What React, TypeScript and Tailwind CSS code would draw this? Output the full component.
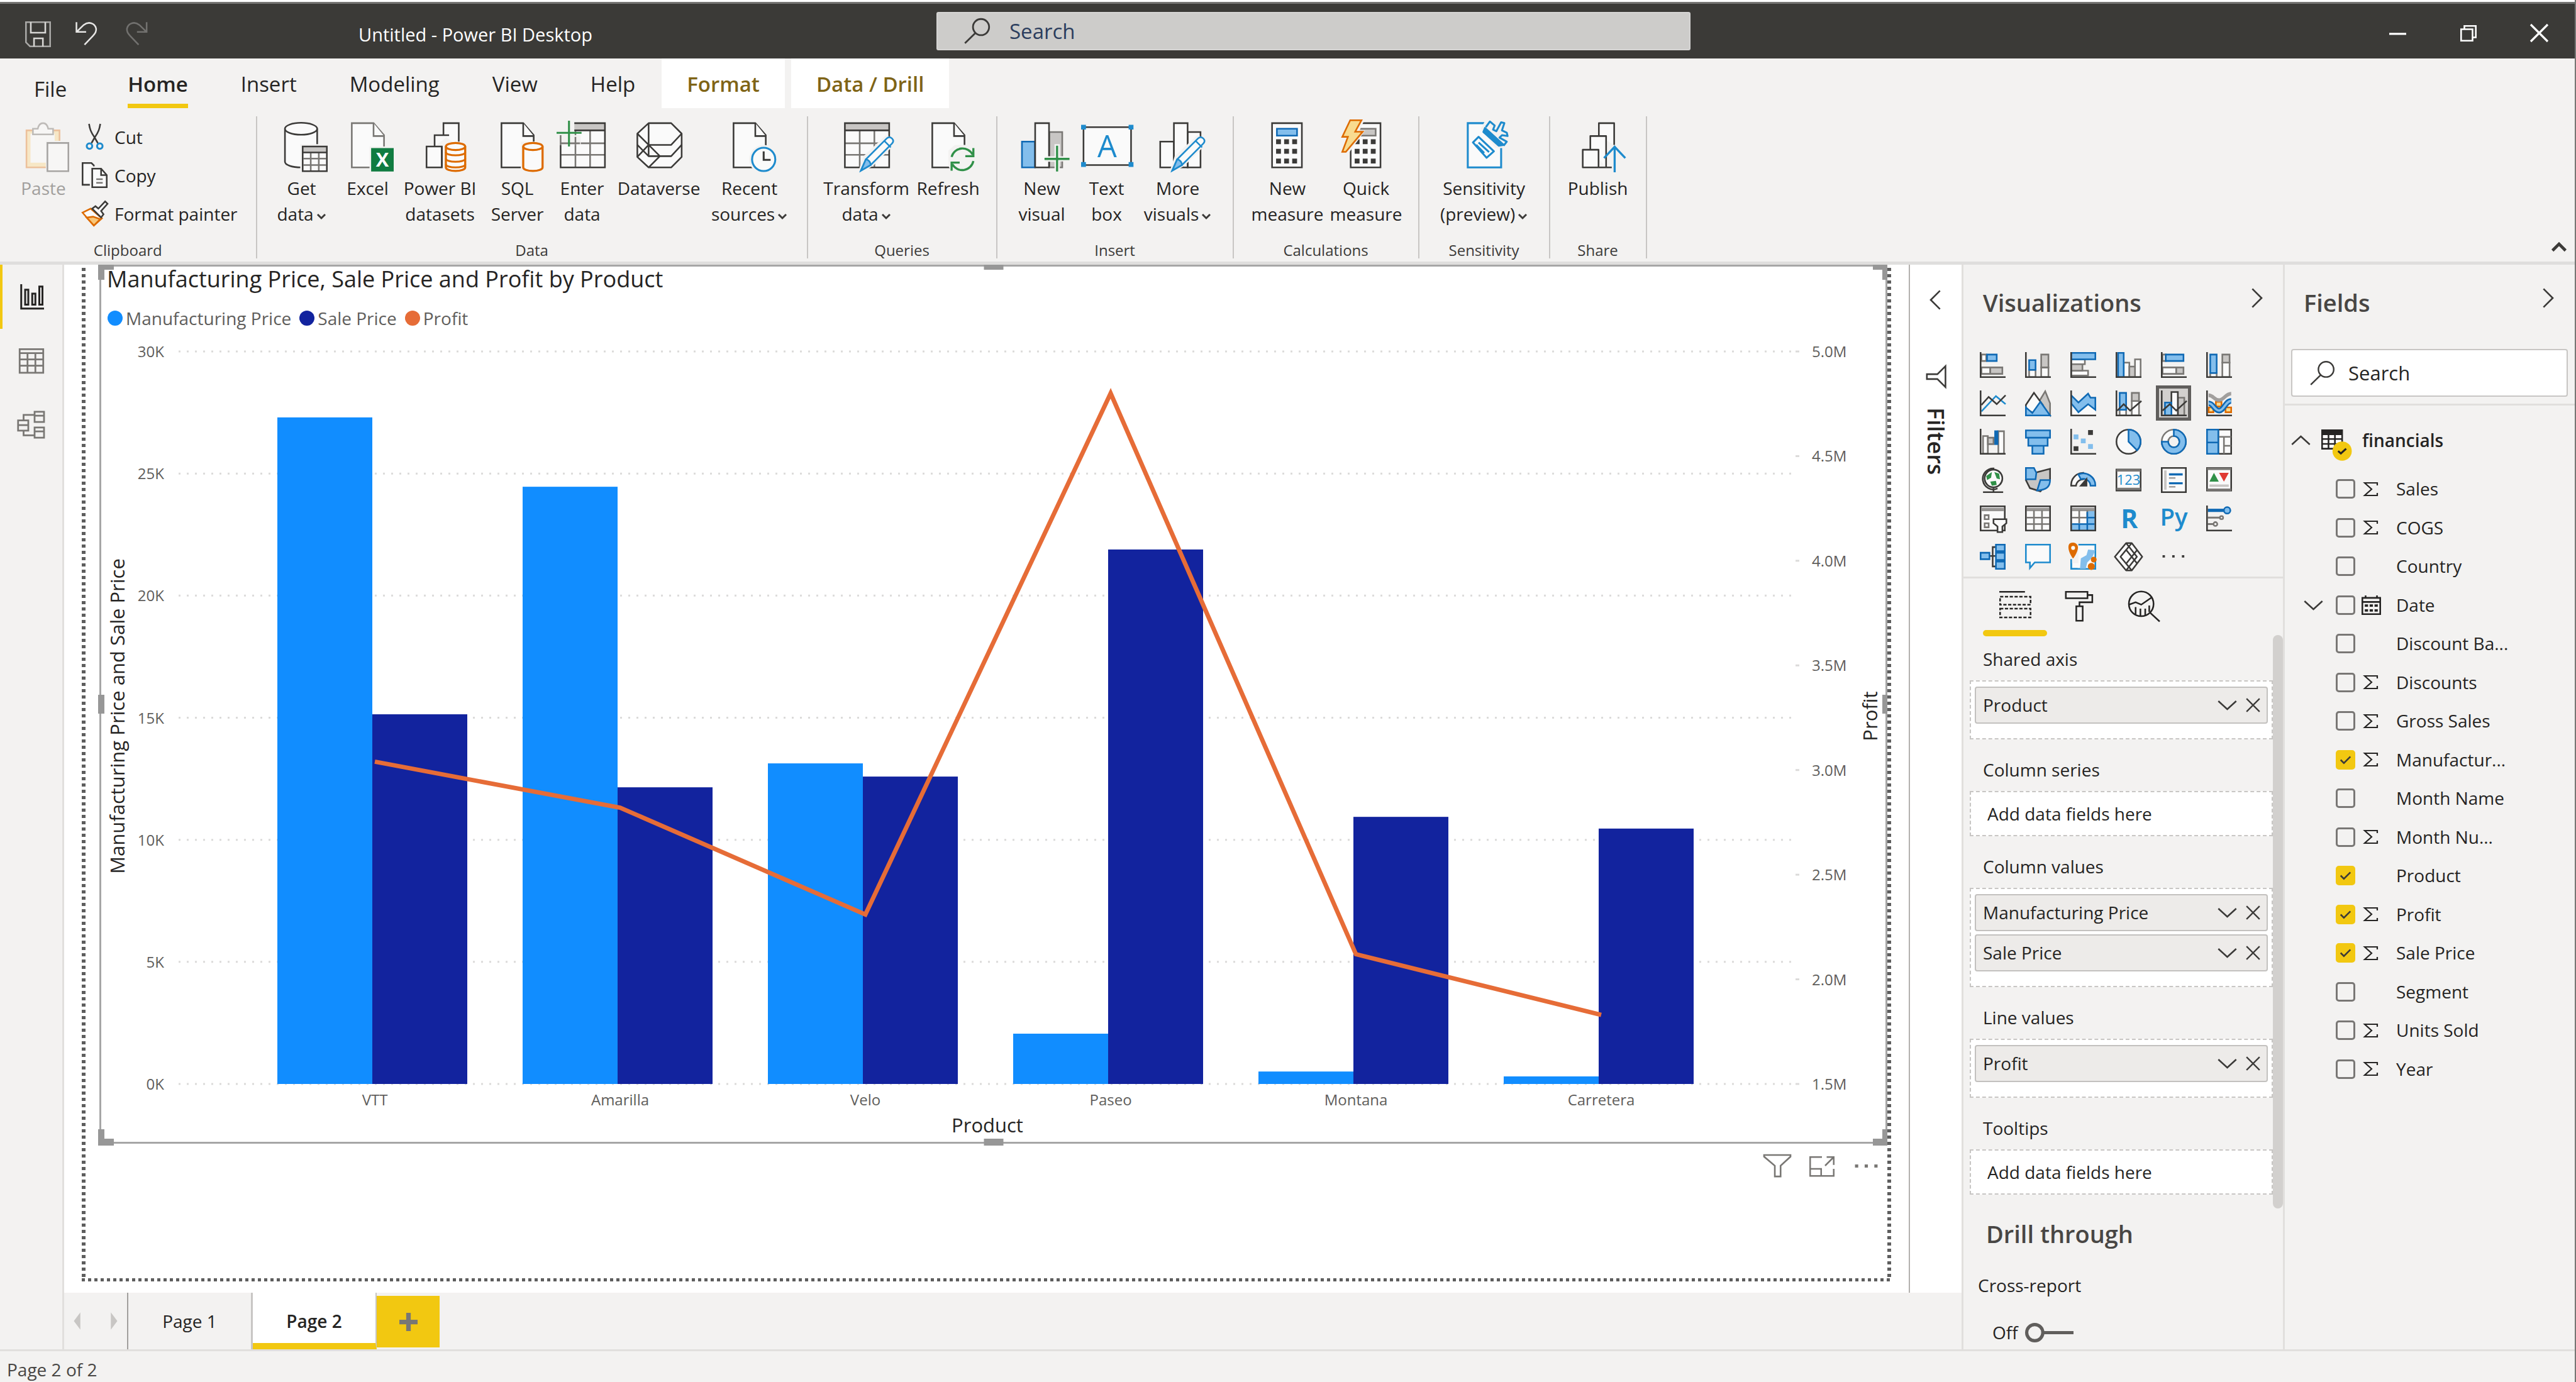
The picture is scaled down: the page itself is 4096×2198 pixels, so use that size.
import { useState, type ReactNode } from "react";
import clsx from "clsx";

const INK = "#3b3a38";
const MID = "#797774";
const PALE = "#c8c6c4";
const PAPER = "#fafafa";
const BLUE = "#0f69b4";
const SKY = "#83beec";
const AZURE = "#1e8bcd";
const ORANGE = "#dd6b00";
const GREEN = "#309048";

type IconProps = { children: ReactNode; size?: number; className?: string };

function Icon({ children, size = 16, className }: IconProps) {
  return (
    <svg viewBox={`0 0 ${size} ${size}`} fill="none" aria-hidden="true" className={clsx("shrink-0 overflow-visible", className)}>
      {children}
    </svg>
  );
}

/* ---------- shared icon parts (32 grid) ---------- */

function Doc({ stroke = INK }: { stroke?: string }) {
  return (
    <g stroke={stroke} fill={PAPER}>
      <path d="M6 1.500h13.500L26 9v20H6z" />
      <path d="M19.500 1.500V9.500H26" />
    </g>
  );
}

function Pencil() {
  return (
    <g>
      <path d="M12.500 32.500 11 31l3-9L28 9l5 2 1 3-14 14z" fill="#f3f2f1" />
      <path d="M15.500 24 28.500 11c1-1 2.200-1 3.200 0s1 2.200 0 3.200L18.500 27.500 12.500 30.800z" fill={PAPER} stroke={AZURE} />
      <path d="M15.500 24c1.800.300 2.800 1.500 3 3.500l-6 3.500z" fill={SKY} stroke={AZURE} />
      <path d="m27 12.500 4 4" stroke={AZURE} />
    </g>
  );
}

function Cylinder() {
  return (
    <g>
      <path d="M18 13h14v19H18z" fill="#f3f2f1" />
      <path d="M19.500 16v13c0 1.200 2.600 2.200 6 2.200s6-1 6-2.200V16" fill={PAPER} stroke={ORANGE} strokeWidth="1.300" />
      <ellipse cx="25.500" cy="16" rx="6" ry="2.200" fill={PAPER} stroke={ORANGE} strokeWidth="1.300" />
    </g>
  );
}

function Grid32() {
  return (
    <g>
      <path d="M2.500 1.500h27.500v27.500H2.500z" fill={PAPER} />
      <path d="M2.500 1.500h27.500v4.500H2.500z" fill={PALE} />
      <path d="M11.700 6v23M20.800 6v23M2.500 14h27.500M2.500 21.200h27.500" stroke={MID} />
      <path d="M2.500 1.500h27.500v27.500H2.500zM2.500 6h27.500" stroke={INK} />
    </g>
  );
}

function Calculator({ quick = false }: { quick?: boolean }) {
  return (
    <g>
      <path d="M6.500 1.500h18.500v27.500H6.500z" fill={PAPER} stroke={INK} />
      <path d="M9.500 5h12.500v4.300H9.500z" fill={quick ? PALE : SKY} stroke={quick ? MID : BLUE} />
      <path
        d="M9 11.500h3v3H9zM14 11.500h3v3h-3zM19 11.500h3v3h-3zM9 17.500h3v3H9zM14 17.500h3v3h-3zM19 17.500h3v3h-3zM9 23.500h3v3H9zM14 23.500h3v3h-3zM19 23.500h3v3h-3z"
        fill={INK}
      />
    </g>
  );
}

const ribbonIcons = {
  paste: (
    <g>
      <path d="M5.500 6h20.500v23H5.500z" fill="#f7e7c6" stroke="#ecc19c" />
      <path d="M8 8h15v18H8z" fill="#f7f6f5" />
      <path d="M9.500 8.500V5h3c.5-2.400 1.800-3.500 3.300-3.500S18.500 2.600 19 5h3v3.500z" fill="#f7f6f5" stroke="#bebbb8" />
      <path d="M17.500 12.500H33V32H17.500z" fill="#f3f2f1" />
      <path d="M18.500 13.800h13v17.500h-13z" fill="#f7f6f5" stroke="#a6a4a2" />
    </g>
  ),
  getData: (
    <g>
      <path d="M5.500 5v20.500c0 2 4.500 3.500 10 3.500s10-1.500 10-3.500V5" fill={PAPER} stroke={INK} />
      <ellipse cx="15.500" cy="5" rx="10" ry="3.700" fill={PAPER} stroke={INK} />
      <path d="M15 14.500h18V33H15z" fill="#f3f2f1" />
      <path d="M16.500 16h15v15.300h-15z" fill={PAPER} />
      <path d="M16.500 16h15v3.500h-15z" fill={PALE} />
      <path d="M21.500 20v11M26.500 20v11M17 23.500h14M17 27.500h14" stroke={MID} />
      <path d="M16.500 16h15v15.300h-15zM16.500 19.700h15" stroke={INK} />
    </g>
  ),
  excel: (
    <g>
      <Doc stroke={MID} />
      <path d="M17 16h16v17H17z" fill="#f3f2f1" />
      <path d="M18 17h14v14.500H18z" fill="#107c41" />
      <text x="25" y="28.500" fontSize="12" fontWeight="700" textAnchor="middle" fill="#fff">
        X
      </text>
    </g>
  ),
  datasets: (
    <g>
      <path d="M7.500 16H17v13H7.500zM12.500 16V9h9M18 9V1.500h9.500V16" fill={PAPER} stroke={INK} />
      <path d="M17 29V16" stroke={INK} />
      <Cylinder />
      <path d="M19.500 19.500c0 2.600 12 2.600 12 0M19.500 23.500c0 2.600 12 2.600 12 0M19.500 27c0 2.600 12 2.600 12 0" stroke={ORANGE} strokeWidth="1.200" />
    </g>
  ),
  sql: (
    <g>
      <Doc />
      <Cylinder />
    </g>
  ),
  enterData: (
    <g>
      <Grid32 />
      <path d="M0 0h11v9h4v6H0z" fill="#f3f2f1" />
      <path d="M2.500 9v6M2.500 14h12M11.700 10v5" stroke={MID} />
      <path d="M7.700 0v16M0 7.500h15.500" stroke={GREEN} strokeWidth="1.200" />
    </g>
  ),
  dataverse: (
    <g stroke={INK} strokeLinejoin="round">
      <path d="M9.500 1.500h14L30 8v14.500L23.500 29h-14l-7-6.500V8z" fill={PAPER} />
      <path d="M9.500 1.500v13.500h14L30 8M2.500 8l7 7 7 7-7 7M2.500 22.500 9.500 15M9.500 22h14l6.500-7M16.500 22H9.500v-7M2.500 15l7 7" />
    </g>
  ),
  recent: (
    <g>
      <Doc />
      <circle cx="24.700" cy="24" r="9" fill="#f3f2f1" />
      <circle cx="24.700" cy="24" r="7.200" fill={PAPER} stroke={AZURE} strokeWidth="1.200" />
      <path d="M24.700 19v5.300H29" stroke={INK} strokeWidth="1.200" />
    </g>
  ),
  transform: (
    <g>
      <Grid32 />
      <Pencil />
    </g>
  ),
  refresh: (
    <g>
      <Doc />
      <path d="M16 18.500 20 15h7v-3h6v20H18l-2-4z" fill="#f3f2f1" />
      <path d="M18 22.500a7 7 0 0 1 13-1.500M31.500 17v5h-5M31.500 25a7 7 0 0 1-13 2M18 31v-5h5" stroke={GREEN} strokeWidth="1.300" />
    </g>
  ),
  newVisual: (
    <g>
      <path d="M3.500 13h8v16h-8z" fill={SKY} stroke={BLUE} />
      <path d="M20.500 7h8v22h-8z" fill={PALE} stroke={MID} />
      <path d="M11.700 1.500h8.600v27.500h-8.600z" fill={PAPER} stroke={INK} />
      <path d="M23.700 14.500h3.300v7.500h6v3.300h-6V32h-3.300v-6.500H18V22h5.700z" fill="#f3f2f1" />
      <path d="M25.300 15.500v16M17.500 23.700H33" stroke={GREEN} strokeWidth="1.300" />
    </g>
  ),
  textBox: (
    <g>
      <path d="M1.500 4h29.500v23.500H1.500z" fill={PAPER} stroke={INK} />
      <path d="M0 2.500h3v3H0zM29.500 2.500h3v3h-3zM0 25.700h3v3H0zM29.500 25.700h3v3h-3z" fill={AZURE} />
      <text x="16.200" y="22.700" fontSize="19" textAnchor="middle" fill={AZURE}>
        A
      </text>
    </g>
  ),
  moreVisuals: (
    <g>
      <path d="M5 13h8.500v16H5zM22 7h8v22h-8z" fill={PAPER} stroke={INK} />
      <path d="M13.500 1.500H22v27.500h-8.500z" fill={PAPER} stroke={INK} />
      <Pencil />
    </g>
  ),
  measure: <Calculator />,
  quick: (
    <g>
      <Calculator quick />
      <path d="M5-1.500h10.500L12 6h3.500L5 20.500H0z" fill="#f3f2f1" />
      <path d="M6.200-.300h7L9.300 6.800H14L3.500 19.300H1.300L4.800 10H1.300z" fill="#f8db8f" stroke={ORANGE} />
    </g>
  ),
  sensitivity: (
    <g>
      <path d="M5.800 1.500h20.700v27.500H5.800z" fill={PAPER} stroke={AZURE} strokeWidth="1.200" />
      <path d="M17-1h15v10l-4 8h-5L14 5z" fill="#f3f2f1" />
      <g stroke={AZURE} strokeWidth="1.200" strokeLinejoin="round">
        <path d="m12.500 10 9.500 9-4.500 4-8.500-9.500z" fill={PAPER} />
        <path d="m12.500 13.500 6.500 6M11 15l5 5" />
        <path d="m16.500 4.500 11.500 10.500-3 .500L15.500 7z" fill={AZURE} />
        <path d="m17 4 2.500-3.500 3 2.500-1 2.500 2 1 3-5.500 2 .5-1.500 4.500 3 1.500.500 2-3.500-.500-1.500 1.500 4.500 2.500-2 2.500" />
      </g>
    </g>
  ),
  publish: (
    <g>
      <path d="M16.500 9.500V1.500H26V15M11.200 17.500V9.500h9.800V29M6.500 18h9.800v11H6.500zM16 29h8.500" fill={PAPER} stroke={INK} strokeLinejoin="round" />
      <path d="M26.300 32V16M19.700 23.200l6.600-7 6.600 7" stroke={AZURE} strokeWidth="1.300" />
    </g>
  ),
};

type RibbonIconName = keyof typeof ribbonIcons;

/* ---------- visualization gallery icons (16 grid) ---------- */

const axis = <path d="M.5 0v15.500H16" stroke={INK} />;

const vizIcons: { name: string; art: ReactNode }[] = [
  {
    name: "Stacked bar chart",
    art: (
      <>
        <path d="M1 1.500h3v4H1zM1 9.500h5.500v4H1z" fill={PAPER} stroke={MID} />
        <path d="M6.500 9.500H14v4H6.500z" fill={PALE} stroke={MID} />
        <path d="M4.500 1.500h6v4h-6z" fill={SKY} stroke={BLUE} />
        {axis}
      </>
    ),
  },
  {
    name: "Stacked column chart",
    art: (
      <>
        <path d="M2.500 11h4v4.500h-4zM10 9.500h4.500v6H10z" fill={PAPER} stroke={MID} />
        <path d="M10 1.500h4.500v8H10z" fill={PALE} stroke={MID} />
        <path d="M2.500 5h4v6h-4z" fill={SKY} stroke={BLUE} />
        {axis}
      </>
    ),
  },
  {
    name: "Clustered bar chart",
    art: (
      <>
        <path d="M.5 4.500H9v3H.5zM.5 11.500h10.500v3H.5z" fill={PAPER} stroke={MID} />
        <path d="M.5 7.500h7v4h-7z" fill={PALE} stroke={MID} />
        <path d="M.5.5h15v4H.5z" fill={SKY} stroke={BLUE} />
        {axis}
      </>
    ),
  },
  {
    name: "Clustered column chart",
    art: (
      <>
        <path d="M5 6.500h3.500v9H5zM12 4.500h3.500v11H12z" fill={PAPER} stroke={MID} />
        <path d="M8.500 9H12v6.500H8.500z" fill={PALE} stroke={MID} />
        <path d="M1.500.5H5v15H1.500z" fill={SKY} stroke={BLUE} />
        {axis}
      </>
    ),
  },
  {
    name: "100% stacked bar chart",
    art: (
      <>
        <path d="M1 1.500h2v4H1zM1 9.500h8.500v4H1z" fill={PAPER} stroke={MID} />
        <path d="M9.500 9.500H14v4H9.500z" fill={PALE} stroke={MID} />
        <path d="M3 1.500h11v4H3z" fill={SKY} stroke={BLUE} />
        {axis}
      </>
    ),
  },
  {
    name: "100% stacked column chart",
    art: (
      <>
        <path d="M2.500 13h4v2.500h-4zM10 6.500h4.500v9H10z" fill={PAPER} stroke={MID} />
        <path d="M10 1.500h4.500v5H10z" fill={PALE} stroke={MID} />
        <path d="M2.500 1.500h4V13h-4z" fill={SKY} stroke={BLUE} />
        {axis}
      </>
    ),
  },
  {
    name: "Line chart",
    art: (
      <>
        <path d="m1 13 9-9.500 6 5" stroke={AZURE} />
        <path d="m1 9 4.500-5 5 4.500L16 3" stroke={INK} />
        {axis}
      </>
    ),
  },
  {
    name: "Area chart",
    art: (
      <>
        <path d="M8 8 12.500.5 15.500 8v7.500z" fill={PALE} stroke={MID} />
        <path d="M.5 9 5.500 1.500 11 9l-5 5.500-5.500-3z" fill={PAPER} stroke={INK} />
        <path d="m.5 10.500 4 3.500L9.500 7l6 8.500H.5z" fill={SKY} stroke={BLUE} />
      </>
    ),
  },
  {
    name: "Stacked area chart",
    art: (
      <>
        <path d="m.5 8 4.500 5 6-4.500 4.500 4v3H.5z" fill={PAPER} />
        <path d="m.5 3 4.500 4.500L11 2l1.500 2.500h3v7.500L11 8.500 5 13.500.5 8z" fill={SKY} stroke={BLUE} />
        {axis}
      </>
    ),
  },
  {
    name: "Line and stacked column chart",
    art: (
      <>
        <path d="M2.500 12h4v3.500h-4zM10 6.500h4.500v9H10z" fill={PAPER} stroke={MID} />
        <path d="M10 1.500h4.500v5H10z" fill={PALE} stroke={MID} />
        <path d="M2.500 1.500h4V12h-4z" fill={SKY} stroke={BLUE} />
        <path d="m1 12.500 4-4 4 4 7-6" stroke={INK} />
        {axis}
      </>
    ),
  },
  {
    name: "Line and clustered column chart",
    art: (
      <>
        <path d="M10.500 4.500h4v11h-4z" fill={PALE} stroke={MID} />
        <path d="M6.500 1h4v14.500h-4z" fill={PAPER} stroke={INK} />
        <path d="M2.500 7.500h4v8h-4z" fill={SKY} stroke={BLUE} />
        <path d="m1 12.500 4.500-4 4 4 6.500-6" stroke={INK} />
        {axis}
      </>
    ),
  },
  {
    name: "Ribbon chart",
    art: (
      <>
        <path d="M1.500 10.500h3v3h-3zM12 10.500h3.500v3H12zM6 7h3.500v3H6z" fill="#f8db8f" stroke={ORANGE} />
        <path d="M1.500 3c3 0 3.500 3 6.500 3s4-4 7.500-4" stroke="#a19f9d" strokeWidth="2.200" />
        <path d="M1.500 8c3 0 3.500 4.500 6.500 4.500S12 6.500 15.500 6.500" stroke={BLUE} strokeWidth="3.400" />
        <path d="M1.500 8c3 0 3.500 4.500 6.500 4.500S12 6.500 15.500 6.500" stroke={SKY} strokeWidth="1.400" />
        {axis}
      </>
    ),
  },
  {
    name: "Waterfall chart",
    art: (
      <>
        <path d="M2 4.500h3v11H2zM11.500 1.500H15v14h-3.500z" fill={PAPER} stroke={MID} />
        <path d="M5 5.500h3.500v4H5z" fill={PALE} stroke={MID} />
        <path d="M9 1h2.500v9H9z" fill={BLUE} />
        {axis}
      </>
    ),
  },
  {
    name: "Funnel chart",
    art: <path d="M.5 1h15v4.500H.5zM2 5.500h12v5H2zM4.500 10.500h7v5h-7z" fill={SKY} stroke={BLUE} />,
  },
  {
    name: "Scatter chart",
    art: (
      <>
        <path d="M2 3.500h3v3H2zM6.500 6h3v3h-3zM11 9.500h3v3h-3z" fill={SKY} />
        <path d="M11 .8h3v3h-3zM2 10.800h3v3H2z" fill={INK} />
        {axis}
      </>
    ),
  },
  {
    name: "Pie chart",
    art: (
      <>
        <circle cx="8" cy="8" r="7.500" fill={PAPER} stroke={INK} />
        <path d="M8 .5a7.500 7.500 0 0 1 5.300 12.800L8 8z" fill={SKY} stroke={BLUE} />
      </>
    ),
  },
  {
    name: "Donut chart",
    art: (
      <>
        <circle cx="8" cy="8" r="5.500" stroke={MID} strokeWidth="5" />
        <circle cx="8" cy="8" r="5.500" stroke={PAPER} strokeWidth="3" />
        <path d="M8 .5A7.500 7.500 0 1 1 .5 8h4A3.500 3.500 0 1 0 8 4.500z" fill={SKY} stroke={BLUE} />
      </>
    ),
  },
  {
    name: "Treemap",
    art: (
      <>
        <path d="M7.500.5h8v15h-8z" fill={PAPER} stroke={INK} />
        <path d="M8 5h7.500M11 5v10.500M11 10.500h4.500" stroke={MID} />
        <path d="M.5.5h7v15h-7zM.5 8.500h7" fill={SKY} stroke={BLUE} />
      </>
    ),
  },
  {
    name: "Map",
    art: (
      <>
        <path d="M9 .8a6.500 6.500 0 1 0 2 12.400M8.500 13v2.500M2 15.500h12.500" stroke={INK} />
        <circle cx="8.500" cy="7" r="5.500" fill={PAPER} stroke={INK} />
        <path d="M4 5.500 7.500 3 7 6.500 4.500 8zM9 3l3 1 .5 3.500-2-.5zM6.500 9l3.500-.5.500 2.500-3 .5z" fill={GREEN} />
      </>
    ),
  },
  {
    name: "Filled map",
    art: (
      <>
        <path d="M6 3.500 15.500 1v7l-6 7L3 13 .5 8z" fill={PALE} stroke={INK} />
        <path d="M.5.5h5l1.500 3-.500 4h-6zM9.500 8h6c0 4-2 6-8 6.500z" fill={SKY} stroke={BLUE} />
      </>
    ),
  },
  {
    name: "Gauge",
    art: (
      <>
        <path d="M.5 11.500h3A4.500 4.500 0 0 1 8 7.500v-4A7.500 7.500 0 0 0 .5 11.500z" fill={PAPER} stroke={INK} />
        <path d="M5 4.500A7.500 7.500 0 0 1 15.500 11.500h-3A4.500 4.500 0 0 0 6.500 7.500z" fill={SKY} stroke={BLUE} />
        <path d="m6.500 11.500 3.500-4v4z" fill={INK} stroke={INK} />
      </>
    ),
  },
  {
    name: "Card",
    art: (
      <>
        <path d="M.5 1.500h15v13H.5z" fill={PAPER} stroke={INK} />
        <path d="M.5 2h15M.5 13.500h15" stroke={MID} strokeWidth="1.500" />
        <text x="8" y="11" fontSize="8.500" textAnchor="middle" fill={AZURE}>
          123
        </text>
      </>
    ),
  },
  {
    name: "Multi-row card",
    art: (
      <>
        <path d="M.5.5h15v15H.5z" fill={PAPER} stroke={INK} />
        <path d="M2 2h1.500v12H2z" fill={PALE} />
        <path d="M5 4.500h8.500M5 10h8.500" stroke={BLUE} strokeWidth="1.300" />
        <path d="M5 6.700h4M5 12.200h4" stroke="#a19f9d" />
      </>
    ),
  },
  {
    name: "KPI",
    art: (
      <>
        <path d="M.5.5h15v14H.5z" fill={PAPER} stroke={INK} />
        <path d="M.5 1h15M.5 14h15" stroke={MID} strokeWidth="1.500" />
        <path d="m2 9 2.800-5.500L7.800 9z" fill={GREEN} />
        <path d="M8 3.500h6L11 9z" fill="#e03a33" />
        <path d="M2 11.500h12" stroke={PALE} strokeWidth="1.500" />
      </>
    ),
  },
  {
    name: "Slicer",
    art: (
      <>
        <path d="M.5.5h15v15H.5z" fill={PAPER} stroke={INK} />
        <path d="M1 2.500h14" stroke="#979593" strokeWidth="2" />
        <path d="M3 6h2.500v2.500H3zM3 11h2.500v2.500H3z" stroke={MID} />
        <path d="M8.500 8.500h8v2.500L14 13v3.500h-3V13L8.500 11z" fill={PAPER} stroke={INK} />
      </>
    ),
  },
  {
    name: "Table",
    art: (
      <>
        <path d="M.5.5h15v15H.5z" fill={PAPER} />
        <path d="M1 2.500h14" stroke="#979593" strokeWidth="2" />
        <path d="M5.500 3v12M10.500 3v12M1 7.500h14M1 11.500h14" stroke={MID} />
        <path d="M.5.5h15v15H.5z" stroke={INK} />
      </>
    ),
  },
  {
    name: "Matrix",
    art: (
      <>
        <path d="M.5.5h15v15H.5z" fill={PAPER} />
        <path d="M10.500 3.500h5v12H.5v-4h10z" fill={SKY} />
        <path d="M1 2.500h14" stroke="#979593" strokeWidth="2" />
        <path d="M5.500 3v8M10.500 3v4M1 7.500h9.500" stroke={MID} />
        <path d="M5.500 11.500v4M10.500 4v11.500M1 11.500h14M10.500 7.500h5" stroke={BLUE} />
        <path d="M.5.5h15v15H.5z" stroke={INK} />
      </>
    ),
  },
  {
    name: "R script visual",
    art: (
      <text x="8.500" y="14" fontSize="16" fontWeight="700" textAnchor="middle" fill={AZURE}>
        R
      </text>
    ),
  },
  {
    name: "Python visual",
    art: (
      <text x="8" y="12.500" fontSize="15" fontWeight="600" textAnchor="middle" fill={AZURE}>
        Py
      </text>
    ),
  },
  {
    name: "Key influencers",
    art: (
      <>
        <path d="M1 3h11" stroke={BLUE} strokeWidth="2" />
        <circle cx="13" cy="3" r="2" fill={SKY} stroke={BLUE} />
        <path d="M1 7.500h7.500M1 11.500h4" stroke={MID} strokeWidth="1.200" />
        <circle cx="9.500" cy="7.500" r="1" stroke={MID} />
        <circle cx="5.700" cy="11.500" r="1.200" stroke={MID} />
        {axis}
      </>
    ),
  },
  {
    name: "Decomposition tree",
    art: (
      <>
        <path d="M6 7.500h4M10 2H8v12h2" stroke={INK} />
        <path d="M.5 5.500h5.500v4H.5zM10 .5h5.500v4H10zM10 5.500h5.500v4.500H10zM10 11h5.500v4.500H10z" fill={SKY} stroke={BLUE} />
      </>
    ),
  },
  {
    name: "Q&A",
    art: <path d="M.5.5h15v11H6l-3 3.500v-3.500H.5z" fill={PAPER} stroke={AZURE} />,
  },
  {
    name: "ArcGIS map",
    art: (
      <>
        <path d="M.5.5h15v15H.5z" fill={PAPER} stroke={AZURE} />
        <path d="M15.500 4 11 3.500 10 7 6.500 9l-.5 6.500h3.500l1-4 3-3z" fill={SKY} />
        <path d="M2-1h3v13H-1.500V5z" fill="#f3f2f1" />
        <path d="M2-.8a3 3 0 0 1 2.700 3C4.700 5 2 9 1.700 9S-1.200 5-1.200 2.200 .3-.8 2-.8z" fill={ORANGE} />
        <circle cx="1.700" cy="2.500" r="1.200" fill={PAPER} />
        <path d="M.5 9.500v6h4" stroke={AZURE} />
        <circle cx="14.500" cy="9.800" r="1.800" fill={ORANGE} />
        <circle cx="13" cy="14" r="2.200" fill={ORANGE} />
      </>
    ),
  },
  {
    name: "Power Apps",
    art: (
      <g stroke={INK} strokeLinejoin="round">
        <path d="M6.500-.5h3.500l6.500 8.500-6.500 8.500H6.500L-.5 8z" fill={PAPER} />
        <path d="M6.500-.5 13.200 8l-6.700 8.500M10-.5 3 8l7 8.500M3 8l3.500-4.300M6.500 3.700 13.200 12M6.500 12.300l6.700-8.300" />
      </g>
    ),
  },
];

const SELECTED_VIZ = "Line and clustered column chart";

/* ---------- ribbon ---------- */

function Caret() {
  return (
    <Icon size={8} className="ml-1 inline-block size-[16px]">
      <path d="m1 2.500 3 3 3-3" stroke={INK} strokeWidth="1.500" />
    </Icon>
  );
}

type RibbonButtonProps = { icon: RibbonIconName; lines: string[]; width: string; menu?: boolean; disabled?: boolean };

function RibbonButton({ icon, lines, width, menu, disabled }: RibbonButtonProps) {
  return (
    <button
      type="button"
      disabled={disabled}
      className={clsx("flex flex-col items-center pt-[7px] text-[28px] leading-[41px] whitespace-nowrap", width, disabled ? "text-[#a19f9d]" : "text-[#252423]")}
    >
      <Icon size={32} className="mb-[5px] size-[82px]">
        {ribbonIcons[icon]}
      </Icon>
      {lines.map((line, i) => (
        <span key={line}>
          {line}
          {menu && i === lines.length - 1 && <Caret />}
        </span>
      ))}
    </button>
  );
}

function RibbonGroup({ label, className, children }: { label: string; className: string; children: ReactNode }) {
  return (
    <section aria-label={label} className="flex flex-col justify-between border-r-2 border-[#c8c6c4]">
      <div className={clsx("flex items-start", className)}>{children}</div>
      <div className="text-center text-[24px] leading-[26px] text-[#3b3a39]">{label}</div>
    </section>
  );
}

const clipboardActions = [
  {
    label: "Cut",
    art: (
      <>
        <path d="M4.500 0c.5 3 1 5 3.500 8.500L10 12M11.500 0c-.5 3-1 5-3.500 8.500L6 12" stroke={INK} />
        <circle cx="4.800" cy="13.800" r="1.700" stroke={AZURE} strokeWidth="1.200" />
        <circle cx="11.200" cy="13.800" r="1.700" stroke={AZURE} strokeWidth="1.200" />
      </>
    ),
  },
  {
    label: "Copy",
    art: (
      <>
        <path d="M.5 14V.5H6L7.500 2v12z" fill={PAPER} stroke={INK} />
        <path d="M5 2.500h11V16H5z" fill="#f3f2f1" />
        <path d="M6.500 4h5.500l3.500 4v7.500h-9z" fill={PAPER} stroke={INK} />
        <path d="M12 4v4h3.500" stroke={INK} />
        <path d="M9 10.500h4M9 12.800h4" stroke={MID} />
      </>
    ),
  },
  {
    label: "Format painter",
    art: (
      <>
        <path d="m.5 7.500 5-2.500 7 6-5 4.500z" fill={PAPER} stroke={ORANGE} />
        <path d="m3 10.500 4-.500 4.500 1.500-4 4z" fill="#f8c77a" stroke={ORANGE} />
        <path d="M6.500 5 8.500 3.500l1.800 1.500L14.500.5 16 2l-4 4.500 1.500 2L12 10.500z" fill={PAPER} stroke={INK} />
      </>
    ),
  },
];

const tabs = ["Home", "Insert", "Modeling", "View", "Help"];

function Ribbon() {
  return (
    <div className="border-b-[5px] border-[#dfdedd]">
      <nav className="flex h-[79px] items-stretch text-[33px] leading-[46px] text-[#252423]">
        <button type="button" className="mt-[26px] self-start pr-[55px] pl-[54px]">
          File
        </button>
        {tabs.map((tab) => (
          <button key={tab} type="button" className={clsx("flex flex-col justify-between px-[42px] pt-[18px]", tab === "Home" && "font-semibold")}>
            {tab}
            {tab === "Home" && <span className="h-[7px] w-full bg-[#f2c811]" />}
          </button>
        ))}
        <div className="flex gap-[10px] font-semibold text-[#7f6416]">
          <button type="button" className="flex bg-white px-[40px] pt-[18px]">
            Format
          </button>
          <button type="button" className="flex bg-white px-[40px] pt-[18px]">
            Data / Drill
          </button>
        </div>
      </nav>

      <div className="flex h-[244px] pt-[13px] pb-[5px]">
        <RibbonGroup label="Clipboard" className="pr-[29px] pl-[24px]">
          <RibbonButton icon="paste" lines={["Paste"]} width="w-[90px]" disabled />
          <div className="ml-[16px] flex flex-col pt-[2px]">
            {clipboardActions.map((a) => (
              <button key={a.label} type="button" className="flex h-[61px] items-center gap-[11px] text-[28px] text-[#252423]">
                <Icon className="size-[41px]">{a.art}</Icon>
                {a.label}
              </button>
            ))}
          </div>
        </RibbonGroup>
        <RibbonGroup label="Data" className="pr-[22px] pl-[14px]">
          <RibbonButton icon="getData" lines={["Get", "data"]} width="w-[114px]" menu />
          <RibbonButton icon="excel" lines={["Excel"]} width="w-[96px]" />
          <RibbonButton icon="datasets" lines={["Power BI", "datasets"]} width="w-[134px]" />
          <RibbonButton icon="sql" lines={["SQL", "Server"]} width="w-[112px]" />
          <RibbonButton icon="enterData" lines={["Enter", "data"]} width="w-[94px]" />
          <RibbonButton icon="dataverse" lines={["Dataverse"]} width="w-[150px]" />
          <RibbonButton icon="recent" lines={["Recent", "sources"]} width="w-[138px]" menu />
        </RibbonGroup>
        <RibbonGroup label="Queries" className="pr-[21px] pl-[18px]">
          <RibbonButton icon="transform" lines={["Transform", "data"]} width="w-[150px]" menu />
          <RibbonButton icon="refresh" lines={["Refresh"]} width="w-[110px]" />
        </RibbonGroup>
        <RibbonGroup label="Insert" className="pr-[22px] pl-[16px]">
          <RibbonButton icon="newVisual" lines={["New", "visual"]} width="w-[110px]" />
          <RibbonButton icon="textBox" lines={["Text", "box"]} width="w-[96px]" />
          <RibbonButton icon="moreVisuals" lines={["More", "visuals"]} width="w-[130px]" menu />
        </RibbonGroup>
        <RibbonGroup label="Calculations" className="pr-[20px] pl-[23px]">
          <RibbonButton icon="measure" lines={["New", "measure"]} width="w-[125px]" />
          <RibbonButton icon="quick" lines={["Quick", "measure"]} width="w-[125px]" />
        </RibbonGroup>
        <RibbonGroup label="Sensitivity" className="px-[22px]">
          <RibbonButton icon="sensitivity" lines={["Sensitivity", "(preview)"]} width="w-[162px]" menu />
        </RibbonGroup>
        <RibbonGroup label="Share" className="px-[22px]">
          <RibbonButton icon="publish" lines={["Publish"]} width="w-[108px]" />
        </RibbonGroup>
        <button type="button" aria-label="Collapse the ribbon" className="mr-[12px] mb-[6px] ml-auto self-end">
          <Icon size={10} className="size-[26px]">
            <path d="m1 7.500 4-4 4 4" stroke={INK} strokeWidth="1.800" />
          </Icon>
        </button>
      </div>
    </div>
  );
}

/* ---------- title bar ---------- */

function TitleBar() {
  return (
    <header className="flex h-[90px] items-center border-t-[3px] border-[#777674] bg-[#3b3a37] text-white">
      <div className="flex w-[1489px] items-center pt-[10px] pl-[40px]">
        <button type="button" aria-label="Save">
          <Icon className="size-[41px]">
            <path d="M.5.5h15v15H3L.5 13z" stroke="#a9a8a6" />
            <path d="M3.500.5v6.500h9V.5M5.500 15.500v-5h5.500v5" stroke="#d8d7d5" />
          </Icon>
        </button>
        <button type="button" aria-label="Undo" className="ml-[38px]">
          <Icon className="size-[41px]">
            <path d="M1 .5v6h6M1.300 6.300 5.500 2.200C8.500-.2 12.500 1 13.200 4.500c.3 2-1 3.500-2 4.500L6 14.500" stroke="#e6e5e4" />
          </Icon>
        </button>
        <button type="button" aria-label="Redo" className="ml-[36px]">
          <Icon className="size-[41px]">
            <path d="M14.500.5v6h-6M14.200 6.300 10 2.200C7-.2 3 1 2.300 4.500c-.3 2 1 3.500 2 4.500L9.500 14.500" stroke="#72716f" />
          </Icon>
        </button>
        <h1 className="ml-[333px] text-[29px] leading-[40px]">Untitled - Power BI Desktop</h1>
      </div>
      <label className="flex h-[61px] flex-1 items-center gap-[31px] rounded-[3px] border-2 border-[#d6d5d4] bg-[#cdccca] pl-[42px]">
        <Icon className="size-[41px]">
          <circle cx="10.500" cy="5.500" r="5" stroke={INK} strokeWidth="1.100" />
          <path d="M7 9.200.5 15.500" stroke={INK} strokeWidth="1.100" />
        </Icon>
        <input type="text" aria-label="Search" placeholder="Search" className="w-full bg-transparent text-[33px] leading-[46px] outline-none placeholder:text-[#2c3e5e]" />
      </label>
      <div className="flex w-[1406px] items-center justify-end gap-[86px] pt-[6px] pr-[43px]">
        <button type="button" aria-label="Minimize">
          <Icon size={10} className="size-[27px]">
            <path d="M0 5.500h10" stroke="#fff" strokeWidth="1.200" />
          </Icon>
        </button>
        <button type="button" aria-label="Restore">
          <Icon size={10} className="size-[26px]">
            <path d="M.5 2.500h7v7h-7zM2.500 2.500v-2h7v7h-2" stroke="#fff" />
          </Icon>
        </button>
        <button type="button" aria-label="Close">
          <Icon size={10} className="size-[27px]">
            <path d="m0 0 10 10M10 0 0 10" stroke="#fff" strokeWidth="1.200" />
          </Icon>
        </button>
      </div>
    </header>
  );
}

/* ---------- left rail ---------- */

const views = [
  {
    label: "Report",
    art: (
      <>
        <path d="M1.500 0v15.500H16" stroke="#252423" strokeWidth="1.200" />
        <path d="M4 3.500h2v9.500H4zM8.500 6h2v7h-2zM13 1.500h2V13h-2z" stroke="#252423" strokeWidth="1.200" />
      </>
    ),
  },
  {
    label: "Data",
    art: <path d="M.5.500h15v15H.5zM.5 3h15M.5 7h15M.5 11h15M5.500 3v12.500M10.500 3v12.500" stroke={MID} strokeWidth="1.100" />,
  },
  {
    label: "Model",
    art: (
      <path
        d="M-.5 5H6v6.500H-.5zM-.5 8H6M10-.5h6v6.500h-6zM10 2h6M10 9.500h6v6.500h-6zM10 12h6M3 5V1.500h7M3 11.500v3h7"
        stroke={MID}
        strokeWidth="1.100"
      />
    ),
  },
];

function ViewRail() {
  return (
    <nav aria-label="Views" className="flex w-[102px] shrink-0 flex-col border-r-[3px] border-[#e1dfdd]">
      {views.map((v, i) => (
        <button
          key={v.label}
          type="button"
          aria-label={v.label}
          className={clsx("flex h-[102px] items-center justify-center border-l-4 pr-[4px]", i === 0 ? "border-[#f2c811]" : "border-transparent")}
        >
          <Icon className="size-[40px]">{v.art}</Icon>
        </button>
      ))}
    </nav>
  );
}

/* ---------- chart ---------- */

type Row = { product: string; manufacturing: number; sale: number; profit: number };

const rows: Row[] = [
  { product: "VTT", manufacturing: 27.3, sale: 15.14, profit: 3.04 },
  { product: "Amarilla", manufacturing: 24.46, sale: 12.15, profit: 2.82 },
  { product: "Velo", manufacturing: 13.13, sale: 12.59, profit: 2.31 },
  { product: "Paseo", manufacturing: 2.06, sale: 21.89, profit: 4.8 },
  { product: "Montana", manufacturing: 0.51, sale: 10.94, profit: 2.12 },
  { product: "Carretera", manufacturing: 0.31, sale: 10.46, profit: 1.83 },
];

const series = [
  { label: "Manufacturing Price", swatch: "bg-[#118dff]" },
  { label: "Sale Price", swatch: "bg-[#12239e]" },
  { label: "Profit", swatch: "bg-[#e66c37]" },
];

const TOP = 33;
const BASE = 1198;
const BAR = 151;

const priceY = (k: number) => BASE - (k / 30) * (BASE - TOP);
const profitY = (m: number) => BASE - ((m - 1.5) / 3.5) * (BASE - TOP);
const barX = (i: number) => 431 + i * 390;

function ComboChart() {
  return (
    <svg viewBox="0 0 2837 1290" className="block w-full" role="img" aria-label="Manufacturing Price, Sale Price and Profit by Product">
      {[0, 5, 10, 15, 20, 25, 30].map((k) => (
        <g key={k}>
          <line x1="123" x2="2691" y1={priceY(k)} y2={priceY(k)} stroke="#dcdbda" strokeWidth="3" strokeDasharray="3 10" />
          <text x="100" y={priceY(k) + 9} fontSize="24" textAnchor="end" fill="#605e5c">
            {k}K
          </text>
        </g>
      ))}
      {[1.5, 2, 2.5, 3, 3.5, 4, 4.5, 5].map((m) => (
        <g key={m}>
          <line x1="2694" x2="2700" y1={profitY(m)} y2={profitY(m)} stroke="#dcdbda" strokeWidth="3" />
          <text x="2720" y={profitY(m) + 9} fontSize="24" fill="#605e5c">
            {m.toFixed(1)}M
          </text>
        </g>
      ))}
      {rows.map((r, i) => (
        <g key={r.product}>
          <rect x={barX(i) - BAR} width={BAR} y={priceY(r.manufacturing)} height={BASE - priceY(r.manufacturing)} fill="#118dff" />
          <rect x={barX(i)} width={BAR} y={priceY(r.sale)} height={BASE - priceY(r.sale)} fill="#12239e" />
          <text x={barX(i) + 4} y="1232" fontSize="24" textAnchor="middle" fill="#605e5c">
            {r.product}
          </text>
        </g>
      ))}
      <polyline points={rows.map((r, i) => `${barX(i) + 4},${profitY(r.profit)}`).join(" ")} fill="none" stroke="#e66c37" strokeWidth="7" />
      <g fontSize="31" fill="#252423" textAnchor="middle">
        <text x="1409" y="1275">
          Product
        </text>
        <text transform="translate(37 613) rotate(-90)">Manufacturing Price and Sale Price</text>
        <text transform="translate(2824 613) rotate(-90)">Profit</text>
      </g>
    </svg>
  );
}

/* resize grips over the selected visual's frame */
const grips = [
  "-top-[3px] -left-[5px] h-[8px] w-[25px]",
  "-top-[3px] -left-[5px] h-[24px] w-[10px]",
  "-top-[3px] -right-[3px] h-[8px] w-[23px]",
  "-top-[3px] -right-[3px] h-[24px] w-[8px]",
  "-bottom-[6px] -left-[5px] h-[11px] w-[25px]",
  "-bottom-[6px] -left-[5px] h-[26px] w-[10px]",
  "-bottom-[6px] -right-[3px] h-[11px] w-[23px]",
  "-bottom-[6px] -right-[3px] h-[26px] w-[8px]",
  "-top-[3px] left-1/2 h-[8px] w-[31px] -translate-x-1/2",
  "-bottom-[6px] left-1/2 h-[11px] w-[31px] -translate-x-1/2",
  "top-1/2 -left-[5px] h-[30px] w-[10px] -translate-y-1/2",
  "top-1/2 -right-[3px] h-[30px] w-[8px] -translate-y-1/2",
];

function Visual() {
  return (
    <div className="relative border-[3px] border-[#a6a6a6]">
      <h2 className="pl-[9px] text-[36px] leading-[40px] text-[#252423]">Manufacturing Price, Sale Price and Profit by Product</h2>
      <ul className="mt-[22px] flex gap-[13px] pl-[10px] text-[28px] leading-[40px] text-[#605e5c]">
        {series.map((s) => (
          <li key={s.label} className="flex items-center gap-[5px]">
            <span className={clsx("size-[24px] rounded-full", s.swatch)} />
            {s.label}
          </li>
        ))}
      </ul>
      <ComboChart />
      {grips.map((g) => (
        <span key={g} className={clsx("absolute bg-[#979797]", g)} />
      ))}
    </div>
  );
}

function ReportCanvas() {
  return (
    <div className="flex flex-1 flex-col bg-white px-[28px] pb-[18px]">
      <div className="flex flex-1">
        <div className="w-[6px] bg-[repeating-linear-gradient(180deg,transparent_0_5px,#5e5e5e_5px_10px)]" />
        <div className="flex-1 pl-[22px]">
          <Visual />
          <div className="flex justify-end gap-[30px] pt-[14px] pr-[13px]">
            <button type="button" aria-label="Filters on this visual">
              <Icon className="size-[42px]">
                <path d="M0 1.500h16v1L10 8v6.500H6.500V8L0 2.500z" stroke={MID} />
              </Icon>
            </button>
            <button type="button" aria-label="Focus mode">
              <Icon className="size-[40px]">
                <path d="M8 2.500H.5v12h15V10M11 2.500h4.500v5M15.500 2.500 10 8M.5 10h7v4.500" stroke={MID} />
              </Icon>
            </button>
            <button type="button" aria-label="More options">
              <Icon className="size-[41px]">
                <path d="M1 7h2v2H1zM7 7h2v2H7zM13 7h2v2h-2z" fill={MID} />
              </Icon>
            </button>
          </div>
        </div>
        <div className="w-[6px] bg-[repeating-linear-gradient(180deg,transparent_0_5px,#5e5e5e_5px_10px)]" />
      </div>
      <div className="h-[5px] bg-[repeating-linear-gradient(90deg,#5e5e5e_0_5px,transparent_5px_10px)]" />
    </div>
  );
}

function FiltersStrip() {
  return (
    <aside className="flex w-[84px] shrink-0 flex-col items-center border-l-2 border-[#b3b0ad] bg-white pt-[40px]">
      <button type="button" aria-label="Expand filters">
        <Icon size={12} className="size-[32px]">
          <path d="M8.500.5 3 6l5.500 5.500" stroke={INK} />
        </Icon>
      </button>
      <Icon size={14} className="mt-[88px] size-[36px]">
        <path d="M13 .5v13L8 8.500H1.500v-3H8z" stroke={INK} />
      </Icon>
      <h2 className="mt-[31px] text-[36px] leading-[48px] font-semibold text-[#252423] [writing-mode:vertical-rl]">Filters</h2>
    </aside>
  );
}

function PageTabs() {
  return (
    <div className="flex h-[90px] text-[28px] text-[#252423]">
      <div className="flex w-[100px] items-center justify-center gap-[36px]">
        <button type="button" aria-label="Previous page">
          <Icon size={8} className="size-[20px]">
            <path d="M5 0v8L2 4z" fill={PALE} stroke={PALE} />
          </Icon>
        </button>
        <button type="button" aria-label="Next page">
          <Icon size={8} className="size-[20px]">
            <path d="M3 0v8l3-4z" fill={PALE} stroke={PALE} />
          </Icon>
        </button>
      </div>
      <button type="button" className="w-[200px] border-r-[3px] border-l-2 border-[#c8c6c4] border-l-[#a19f9d]">
        Page 1
      </button>
      <button type="button" className="w-[197px] border-r-2 border-b-[10px] border-[#f2c811] border-r-[#c8c6c4] bg-white pt-[10px] font-semibold">
        Page 2
      </button>
      <button type="button" aria-label="New page" className="mt-[5px] mb-[3px] flex w-[100px] items-center justify-center bg-[#f2c811]">
        <Icon size={12} className="size-[29px]">
          <path d="M4.500 0h3v4.500H12v3H7.500V12h-3V7.500H0v-3h4.500z" fill={MID} />
        </Icon>
      </button>
    </div>
  );
}

/* ---------- visualizations pane ---------- */

function ChevronRight() {
  return (
    <Icon size={12} className="size-[32px]">
      <path d="m3.500.5 5.500 5.500-5.500 5.500" stroke={INK} />
    </Icon>
  );
}

function ChevronDown() {
  return (
    <Icon size={12} className="size-[31px]">
      <path d="m.5 3.500 5.500 5L11.500 3.500" stroke={INK} />
    </Icon>
  );
}

function FieldPill({ name }: { name: string }) {
  return (
    <div className="flex h-[59px] items-center rounded-[4px] border-2 border-[#c3c1bf] bg-[#edebe9] pr-[10px] pl-[11px]">
      <span className="flex-1">{name}</span>
      <button type="button" aria-label={`${name} options`} className="mr-[14px]">
        <ChevronDown />
      </button>
      <button type="button" aria-label={`Remove ${name}`}>
        <Icon size={10} className="size-[23px]">
          <path d="m.5.500 9 9M9.500.500l-9 9" stroke={INK} />
        </Icon>
      </button>
    </div>
  );
}

const wells = [
  { label: "Shared axis", fields: ["Product"] },
  { label: "Column series", fields: [] },
  { label: "Column values", fields: ["Manufacturing Price", "Sale Price"] },
  { label: "Line values", fields: ["Profit"] },
  { label: "Tooltips", fields: [] },
];

const paneTabs = [
  {
    label: "Fields",
    art: (
      <g stroke="#252423">
        <path d="M0 .5h16" />
        <path d="M.5 3.500h19v5H.5zM.5 11h19v5.500H.5z" strokeDasharray="2 1" />
      </g>
    ),
  },
  {
    label: "Format",
    art: <path d="M1.500.5H15v4H1.500zM15 2.500h3V7H10v2.500M8 9.500h4v9H8z" stroke="#252423" />,
  },
  {
    label: "Analytics",
    art: (
      <g stroke="#252423">
        <circle cx="8.500" cy="8" r="7.700" />
        <path d="m14 13.500 6 5.500M.8 8.500 5 7l3.500 1.500L15 4M5 10v4.500M8 11v5M11 11v4.500M13.500 9v4" />
      </g>
    ),
  },
];

function VisualizationsPane() {
  const [picked, setPicked] = useState(SELECTED_VIZ);

  return (
    <aside className="flex w-[511px] shrink-0 flex-col border-l-[3px] border-[#e1dfdd] text-[28px] leading-[41px] text-[#252423]">
      <div className="border-b-[3px] border-[#e1dfdd] pr-[26px] pb-[3px] pl-[18px]">
        <div className="flex items-center justify-between pt-[34px] pl-[13px]">
          <h2 className="text-[38px] leading-[52px] font-semibold text-[#484644]">Visualizations</h2>
          <button type="button" aria-label="Collapse visualizations" className="-mt-[14px]">
            <ChevronRight />
          </button>
        </div>
        <div className="mt-[45px] mb-[1px] grid grid-cols-[repeat(6,56px)] gap-x-4 gap-y-[5px]">
          {vizIcons.map((v) => (
            <button
              key={v.name}
              type="button"
              title={v.name}
              onClick={() => setPicked(v.name)}
              className={clsx("flex size-[56px] items-center justify-center border-[5px]", picked === v.name ? "border-[#605e5c] bg-[#d2d0ce]" : "border-transparent")}
            >
              <Icon className="size-[41px]">{v.art}</Icon>
            </button>
          ))}
          <button type="button" aria-label="Get more visuals" className="flex size-[56px] items-center justify-center">
            <Icon className="size-[41px]">
              <path d="M1 7h1.500v1.500H1zM7 7h1.500v1.500H7zM13 7h1.500v1.500H13z" fill={INK} />
            </Icon>
          </button>
        </div>
      </div>

      <div className="flex pl-[31px]">
        {paneTabs.map((t, i) => (
          <button
            key={t.label}
            type="button"
            aria-label={t.label}
            className={clsx("flex w-[102px] flex-col items-center pt-[20px]", i > 0 && "pb-[21px]")}
          >
            <Icon size={20} className="size-[51px]">
              {t.art}
            </Icon>
            {i === 0 && <span className="mt-[11px] h-[10px] w-full rounded-full bg-[#f2c811]" />}
          </button>
        ))}
      </div>

      <div className="flex flex-1">
        <div className="flex-1 pl-[10px]">
          {wells.map((w, i) => (
            <section key={w.label} className={i === 0 ? "mt-[16px]" : "mt-[28px]"}>
              <h3 className="mb-[13px] pl-[21px]">{w.label}</h3>
              {w.fields.length > 0 ? (
                <div className="flex flex-col gap-[5px] border-2 border-dashed border-[#c8c6c4] bg-white px-[6px] pt-[8px] pb-[23px]">
                  {w.fields.map((f) => (
                    <FieldPill key={f} name={f} />
                  ))}
                </div>
              ) : (
                <div className="h-[72px] border-2 border-dashed border-[#c8c6c4] bg-white pt-[14px] pl-[26px]">Add data fields here</div>
              )}
            </section>
          ))}
          <h2 className="mt-[36px] pl-[26px] text-[38px] leading-[52px] font-semibold text-[#484644]">Drill through</h2>
          <div className="mt-[36px] pl-[13px]">Cross-report</div>
          <label className="mt-[34px] flex items-center gap-[11px] pl-[36px]">
            Off
            <input type="checkbox" role="switch" className="sr-only" />
            <svg viewBox="0 0 30 12" fill="none" aria-hidden="true" className="h-[31px] w-[77px]">
              <circle cx="6" cy="6" r="5" stroke="#605e5c" strokeWidth="2" />
              <path d="M11 6h19" stroke="#605e5c" strokeWidth="2" />
            </svg>
          </label>
        </div>
        <div className="-mt-[2px] h-[912px] w-[16px] rounded-full bg-[#d2d0ce]" />
      </div>
    </aside>
  );
}

/* ---------- fields pane ---------- */

type Field = { name: string; kind?: "sum" | "date"; checked?: boolean };

const fields: Field[] = [
  { name: "Sales", kind: "sum" },
  { name: "COGS", kind: "sum" },
  { name: "Country" },
  { name: "Date", kind: "date" },
  { name: "Discount Ba..." },
  { name: "Discounts", kind: "sum" },
  { name: "Gross Sales", kind: "sum" },
  { name: "Manufactur...", kind: "sum", checked: true },
  { name: "Month Name" },
  { name: "Month Nu...", kind: "sum" },
  { name: "Product", checked: true },
  { name: "Profit", kind: "sum", checked: true },
  { name: "Sale Price", kind: "sum", checked: true },
  { name: "Segment" },
  { name: "Units Sold", kind: "sum" },
  { name: "Year", kind: "sum" },
];

function FieldRow({ field }: { field: Field }) {
  return (
    <li className="flex items-center pl-[30px]">
      <span className="flex w-[51px]">{field.kind === "date" && <ChevronDown />}</span>
      <label className="flex items-center">
        <span className="relative flex">
          <input
            type="checkbox"
            defaultChecked={field.checked}
            className="peer size-[31px] appearance-none rounded-[5px] border-[3px] border-[#797775] checked:border-[#f2c811] checked:bg-[#f2c811]"
          />
          <Icon size={12} className="pointer-events-none absolute inset-0 hidden size-[31px] peer-checked:block">
            <path d="m3 6 2 2 4-4" stroke={INK} />
          </Icon>
        </span>
        <span className="flex w-[65px] pl-[10px]">
          {field.kind === "sum" && (
            <Icon size={12} className="ml-[3px] size-[24px]">
              <path d="M11 3V1H1l5.500 5L1 11h10V9" stroke="#252423" strokeWidth="1.100" />
            </Icon>
          )}
          {field.kind === "date" && (
            <Icon size={12} className="size-[31px]">
              <path d="M.5 1.500h11v10H.5zM.5 4h11M2.500 0v2M9.500 0v2" stroke="#252423" />
              <path d="M2 5.500h2V7H2zM5 5.500h2V7H5zM8 5.500h2V7H8zM2 8.500h2V10H2zM5 8.500h2V10H5zM8 8.500h2V10H8z" fill="#252423" />
            </Icon>
          )}
        </span>
        {field.name}
      </label>
    </li>
  );
}

function FieldsPane() {
  return (
    <aside className="w-[464px] shrink-0 border-l-[3px] border-[#e1dfdd] text-[28px] leading-[41px] text-[#252423]">
      <div className="border-b-[3px] border-[#e1dfdd] pr-[11px] pb-[11px] pl-[10px]">
        <div className="flex items-center justify-between pt-[34px] pr-[16px] pl-[20px]">
          <h2 className="text-[38px] leading-[52px] font-semibold text-[#484644]">Fields</h2>
          <button type="button" aria-label="Collapse fields" className="-mt-[14px]">
            <ChevronRight />
          </button>
        </div>
        <label className="mt-[48px] flex h-[76px] items-center gap-[22px] rounded-[4px] border-2 border-[#c8c6c4] bg-white pl-[28px]">
          <Icon className="size-[39px]">
            <circle cx="10.500" cy="5.500" r="5" stroke={INK} />
            <path d="M7 9.200.5 15.500" stroke={INK} />
          </Icon>
          <input type="text" aria-label="Search fields" placeholder="Search" className="w-full bg-transparent text-[31px] leading-[42px] outline-none placeholder:text-[#252423]" />
        </label>
      </div>

      <button type="button" className="mt-[22px] flex items-center pl-[10px] font-semibold">
        <Icon size={12} className="size-[31px]">
          <path d="m.5 8.500 5.500-5 5.500 5" stroke={INK} />
        </Icon>
        <Icon size={20} className="mt-[16px] ml-[17px] size-[51px]">
          <path d="M0 0h13.500v12.500H0z" fill="#252423" />
          <path d="M1 3.500h3v2H1zM5 3.500h3v2H5zM9 3.500h3.500v2H9zM1 6.500h3v2H1zM5 6.500h3v2H5zM9 6.500h3.500v2H9zM1 9.500h3v2H1zM5 9.500h3v2H5z" fill="#fff" />
          <circle cx="13" cy="13.500" r="6" fill="#f2c811" />
          <path d="m10.500 13.500 1.700 1.500 3.300-3" stroke="#252423" strokeWidth="1.200" />
        </Icon>
        <span className="ml-[14px]">financials</span>
      </button>
      <ul className="mt-[13px] grid h-[984px] auto-rows-fr">
        {fields.map((f) => (
          <FieldRow key={f.name} field={f} />
        ))}
      </ul>
    </aside>
  );
}

export default function App() {
  return (
    <div className="flex min-h-screen flex-col border-r-2 border-[#777674] bg-white pt-[3px] font-['Open_Sans','Noto_Sans',sans-serif]">
      <div className="flex flex-1 flex-col bg-[#f3f2f1]">
        <TitleBar />
        <Ribbon />
        <main className="flex flex-1">
          <ViewRail />
          <div className="flex min-w-0 flex-1 flex-col">
            <div className="flex flex-1">
              <ReportCanvas />
              <FiltersStrip />
            </div>
            <PageTabs />
          </div>
          <VisualizationsPane />
          <FieldsPane />
        </main>
        <footer className="border-t-[3px] border-[#e1dfdd] pt-[10px] pl-[11px] text-[28px] leading-[39px] text-[#484644]">Page 2 of 2</footer>
      </div>
    </div>
  );
}
